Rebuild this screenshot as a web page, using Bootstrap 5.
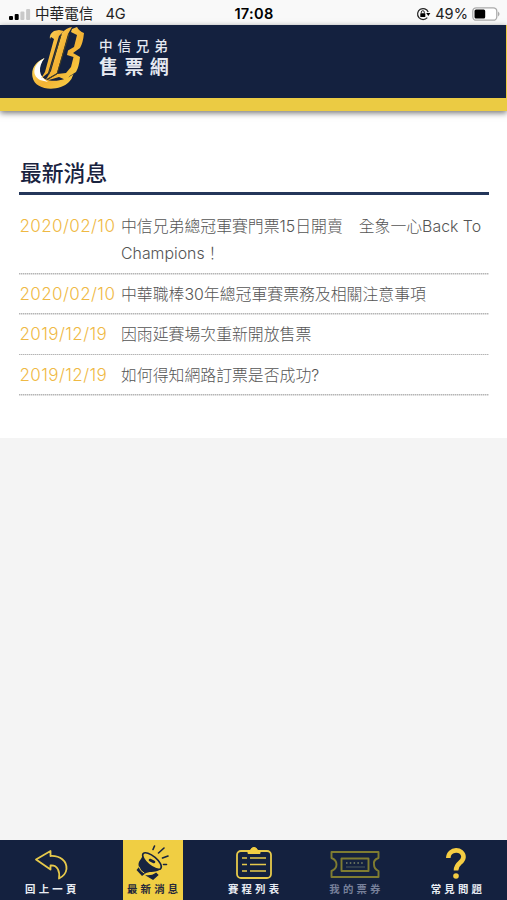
<!DOCTYPE html>
<html lang="zh-Hant">
<head>
<meta charset="utf-8">
<meta name="viewport" content="width=device-width, initial-scale=1">
<title>中信兄弟售票網</title>
<link href="https://cdn.jsdelivr.net/npm/bootstrap@5.3.0/dist/css/bootstrap.min.css" rel="stylesheet">
<style>
:root{--navy:#14213f;--gold:#ebcb43}
body{font-family:Inter,"Noto Sans CJK TC",sans-serif;background:#f4f4f4;height:900px;overflow:hidden}
svg{display:block;flex:none}
.status{height:25px;background:#f9f9f9;font-size:14.6px;line-height:25px;padding:3px 7px 0 9px;color:#222}
.status .clock{font-weight:600;letter-spacing:.3px;color:#000;margin-right:1px}
.side{flex:1 1 0;white-space:nowrap}
.masthead{height:86px;background:var(--navy);border-bottom:13px solid var(--gold);box-shadow:0 2px 6px rgba(0,0,0,.55);padding-left:30px;z-index:1}
.masthead .fill{width:1px;background:var(--gold)}
.brand{color:#e6eaf2;margin:12px 0 0 9px}
.brand-top{font-size:13.6px;line-height:19px;letter-spacing:4.8px;font-weight:500}
.brand-main{font-size:19px;line-height:23px;letter-spacing:6.4px;font-weight:700}
.news{height:327px;background:#fff;padding:46px 18px 0 19px}
.news h1{font-size:21.8px;line-height:32px;font-weight:500;color:#19233f;margin:0;height:38px;border-bottom:3px solid #24365a;padding-left:1px}
.news ul{padding-top:18.4px}
.news li{padding-bottom:7.2px;margin-bottom:6.2px;line-height:27px;font-size:15.87px;color:#555;font-weight:300;background:repeating-linear-gradient(90deg,#b5b5b5 0 1px,#dedede 1px 2px) bottom/100% 1.5px no-repeat}
.news time{width:102px;flex:none;font-size:17px;letter-spacing:.4px;color:#efb944;font-weight:300;white-space:nowrap;padding-left:.5px}
.tabs{height:60px;background:var(--navy)}
.tab{width:60px;height:60px;color:#e9edf4;font-size:10.4px;line-height:14px;letter-spacing:3.2px;font-weight:700;text-decoration:none;white-space:nowrap;padding-top:5px}
.tab span{margin-right:-3.2px}
.tab.on{background:#f0ce43;color:#25283a;margin-left:1px}
.tab.dim{color:#77809a}
</style>
</head>
<body class="d-flex flex-column">
<div class="status d-flex align-items-center">
  <div class="side d-flex align-items-center">
    <svg width="22" height="11" viewBox="0 0 22 11"><rect y="7" width="4" height="4" rx="1"/><rect x="5.7" y="5" width="4" height="6" rx="1"/><rect x="11.4" y="2.5" width="4" height="8.5" rx="1" fill="#c9c9c9"/><rect x="17.1" width="4" height="11" rx="1" fill="#c9c9c9"/></svg>
    <span class="ms-1">中華電信</span><span class="ms-2 ps-1">4G</span>
  </div>
  <div class="clock">17:08</div>
  <div class="side d-flex align-items-center justify-content-end">
    <svg width="15" height="14" viewBox="0 0 15 14"><path d="M12.200 5A5.500 5.500 0 1 0 11.300 10.600" fill="none" stroke="#222" stroke-width="1.2"/><path d="M10.200 6h4.200L12.300 9z"/><rect x="4.300" y="6.300" width="5" height="3.800" rx=".5"/><path d="M5.300 6.500V5.200a1.500 1.500 0 0 1 3 0v1.300" fill="none" stroke="#222"/></svg>
    <span class="ms-1 me-1">49%</span>
    <svg width="28" height="14" viewBox="0 0 28 14"><rect x=".8" y=".8" width="24" height="12.400" rx="3.500" fill="#fff" stroke="#aaa" stroke-width="1.3"/><rect x="2.500" y="2.500" width="10.700" height="9" rx="1.500"/><path d="M26.200 4.500q2.500 2.500 0 5z" fill="#999"/></svg>
  </div>
</div>
<header class="masthead d-flex position-relative">
  <svg width="60" height="66" viewBox="0 0 60 66">
    <defs><linearGradient id="g" x1="0" y1="0" x2="1" y2="1"><stop offset="0" stop-color="#ffe16a"/><stop offset=".55" stop-color="#f3b233"/><stop offset="1" stop-color="#f9d54a"/></linearGradient></defs>
    <path d="M14.500 33C5 37 1 44 2.500 52C5 66 29 67 39 57Q42 54 43.500 49C36 55 24 58 15 54C7 50 7 42 14.500 33Z" fill="url(#g)"/>
    <path d="M14.500 33C3 39 1 50 10 55L18 57C8 51 8 42 14.500 33Z" fill="#fff"/>
    <path d="M20 14Q19 9 24 6L29 5L34 6L29 11L18 48L11 53.500L15 47L24 14L21 12Z" fill="url(#g)"/>
    <path d="M32 8Q36 3 42 2L38 9L27 48L16 54.500L21 46Z" fill="url(#g)"/>
    <path d="M42 4L47 2Q49 6 54 8Q53 18 50 23L43 28L50 32Q49 42 46 47Q40 50 36 55L29 52L17 55.500L27 49L36 48L41 42L43.500 32L37 30L38 25.500L44 22L47 10L41 7Z" fill="url(#g)"/>
    <path d="M31 10L18.500 50M39 9L27 49L17 54.500" stroke="#4a421f" stroke-width="1" fill="none"/>
  </svg>
  <div class="brand"><div class="brand-top">中信兄弟</div><div class="brand-main">售票網</div></div>
  <div class="fill ms-auto"></div>
</header>
<main class="flex-grow-1">
  <section class="news">
    <h1>最新消息</h1>
    <ul class="list-unstyled mb-0">
      <li class="d-flex"><time>2020/02/10</time><span>中信兄弟總冠軍賽門票15日開賣　全象一心Back To Champions！</span></li>
      <li class="d-flex"><time>2020/02/10</time><span>中華職棒30年總冠軍賽票務及相關注意事項</span></li>
      <li class="d-flex"><time>2019/12/19</time><span>因雨延賽場次重新開放售票</span></li>
      <li class="d-flex"><time>2019/12/19</time><span>如何得知網路訂票是否成功?</span></li>
    </ul>
  </section>
</main>
<nav class="tabs row g-0">
  <div class="col d-flex justify-content-center"><a href="#" class="tab d-flex flex-column align-items-center">
    <svg width="40" height="38" viewBox="0 0 40 38" fill="none" stroke="#e6c94b" stroke-width="1.8" stroke-linejoin="round"><path d="M5 14.500L19.500 6V11C29 10.500 36 16 35.500 24C35 28 32 31.500 28 33.500C29 27 27 20 19.500 20.500V24.500Z"/></svg><span>回上一頁</span></a></div>
  <div class="col d-flex justify-content-center"><a href="#" class="tab on d-flex flex-column align-items-center">
    <svg width="40" height="38" viewBox="0 0 40 38" fill="none" stroke="#172440" stroke-width="1.6" stroke-linecap="round"><path d="M10 9C9 15 4 16 6 22L3.500 25L9 31L13 28C18 26 23 28 28 24Z" fill="#172440" stroke="none"/><ellipse cx="19" cy="16" rx="11.500" ry="4.800" transform="rotate(40 19 16)" fill="#f0ce43"/><path d="M17 15L21 17" stroke-width="2.6"/><path d="M6 22Q7 26 11 28" stroke="#f0ce43" stroke-width="1"/><path d="M15 31Q20 31 23 28.500L24.500 30L20 34Z" fill="#172440"/><path d="M20 4.500L21.500 1M25.500 8L31 3M29.500 13L35 11M30.500 19.500H33.500"/></svg><span>最新消息</span></a></div>
  <div class="col d-flex justify-content-center"><a href="#" class="tab d-flex flex-column align-items-center">
    <svg width="40" height="38" viewBox="0 0 40 38" fill="none" stroke="#e6c94b" stroke-width="1.8"><rect x="3" y="6" width="34" height="27" rx="4"/><path d="M14 8.500V5.500H16.500C17 1.500 23 1.500 23.500 5.500H26V8.500Z" fill="#f3cf43" stroke="#f3cf43" stroke-linejoin="round" stroke-width="1"/><path d="M8 13H13M16 13H32M8 19.500H13M16 19.500H32M8 26H13M16 26H32" stroke-width="1.6"/></svg><span>賽程列表</span></a></div>
  <div class="col d-flex justify-content-center"><a href="#" class="tab dim d-flex flex-column align-items-center">
    <svg width="52" height="38" viewBox="0 0 52 38" fill="none" stroke="#7f7c31" stroke-width="1.9" stroke-linejoin="round"><path d="M2.500 7H49.500V13Q44 15 45 19.500Q45 24 49.500 26V32H2.500V26Q7.500 24 7.500 19.500Q7.500 15 2.500 13Z"/><rect x="12.500" y="13.500" width="27" height="12.500"/><path d="M17 18H36" stroke="#7d8768" stroke-width="1.5" stroke-dasharray="1.500 2.300"/><path d="M17 22H36" stroke="#4a5b5c" stroke-width="1"/></svg><span>我的票券</span></a></div>
  <div class="col d-flex justify-content-center"><a href="#" class="tab d-flex flex-column align-items-center">
    <svg width="40" height="38" viewBox="0 0 40 38" fill="none" stroke="#f5cd43" stroke-width="4.600"><path d="M12.300 13C12.500 3 27.500 3 27.500 12C27 18.500 20 17.500 20 25.500"/><circle cx="20" cy="31" r="2.800" fill="#f5cd43" stroke="none"/></svg><span>常見問題</span></a></div>
</nav>
<script src="https://cdn.jsdelivr.net/npm/bootstrap@5.3.0/dist/js/bootstrap.bundle.min.js"></script>
</body>
</html>
